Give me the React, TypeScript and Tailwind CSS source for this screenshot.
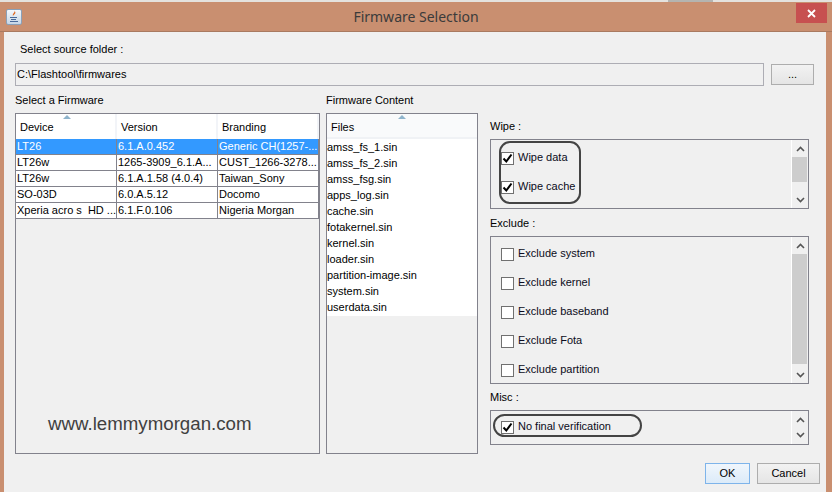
import React from 'react';

const firmwares = [
  { device: 'LT26', version: '6.1.A.0.452', branding: 'Generic CH(1257-...', selected: true },
  { device: 'LT26w', version: '1265-3909_6.1.A...', branding: 'CUST_1266-3278...' },
  { device: 'LT26w', version: '6.1.A.1.58 (4.0.4)', branding: 'Taiwan_Sony' },
  { device: 'SO-03D', version: '6.0.A.5.12', branding: 'Docomo' },
  { device: 'Xperia acro s  HD ...', version: '6.1.F.0.106', branding: 'Nigeria Morgan' },
];

const files = [
  'amss_fs_1.sin',
  'amss_fs_2.sin',
  'amss_fsg.sin',
  'apps_log.sin',
  'cache.sin',
  'fotakernel.sin',
  'kernel.sin',
  'loader.sin',
  'partition-image.sin',
  'system.sin',
  'userdata.sin',
];

const excludes = ['Exclude system', 'Exclude kernel', 'Exclude baseband', 'Exclude Fota', 'Exclude partition'];

const SortArrow = () => (
  <svg width="8" height="4" viewBox="0 0 8 4" className="block">
    <path d="M4 0 L8 4 L0 4 Z" fill="#8fb4cc" />
  </svg>
);

const Chevron = ({ down }: { down?: boolean }) => (
  <svg width="9" height="6" viewBox="0 0 9 6" className="block">
    <path d={down ? 'M1 1 L4.5 4.5 L8 1' : 'M1 5 L4.5 1.5 L8 5'} fill="none" stroke="#555" strokeWidth="1.6" />
  </svg>
);

const ScrollBar = ({ thumb }: { thumb: string }) => (
  <div className="w-[17px] shrink-0 border-l border-white flex flex-col items-center">
    <div className="h-[17px] flex items-center justify-center shrink-0">
      <Chevron />
    </div>
    <div className="flex-1 w-full">
      <div className={`bg-[#cdcdcd] w-[15px] ${thumb}`} />
    </div>
    <div className="h-[17px] flex items-center justify-center shrink-0">
      <Chevron down />
    </div>
  </div>
);

const CheckRow = ({ label, checked, className }: { label: string; checked?: boolean; className?: string }) => (
  <div className={`flex items-center gap-[4px] ${className ?? ''}`}>
    <div className="w-[13px] h-[13px] border border-[#707070] bg-white flex items-center justify-center shrink-0">
      {checked && (
        <svg width="11" height="11" viewBox="0 0 11 11" className="block">
          <path d="M1.5 5.5 L4.3 8.5 L9.5 1.5" fill="none" stroke="#000" strokeWidth="2" />
        </svg>
      )}
    </div>
    <span className="text-[#0b0b20] leading-none -mt-[2px]">{label}</span>
  </div>
);

const JavaIcon = () => (
  <div className="w-[16px] h-[16px] rounded-[2px] border border-[#8aa0b8] bg-gradient-to-b from-[#f4f8fc] to-[#c6d6e6] flex items-center justify-center">
    <svg width="12" height="13" viewBox="0 0 12 13" className="block">
      <path d="M6.5 0.5 C7.5 2.5 4 3.5 5 6 C5.5 4.5 8.5 3.5 7 1.5" fill="#e0661c" />
      <path d="M2 7.5 H9 M3 9.5 H8 M2 11.5 H10" stroke="#4a6a9a" strokeWidth="1" fill="none" />
    </svg>
  </div>
);

export default function App() {
  return (
    <div className="w-[832px] h-[492px] overflow-hidden flex flex-col bg-[#c98f70] text-[11px] text-black font-['Liberation_Sans',sans-serif]">
      <div className="h-[2px] bg-[#e4e2de] shrink-0 pl-[668px]">
        <div className="w-[45px] h-full bg-[#b4b4b0]" />
      </div>

      <div className="h-[30px] shrink-0 grid grid-cols-[1fr_auto_1fr] items-center border-b border-[#a97a60]">
        <div className="pl-[6px]">
          <JavaIcon />
        </div>
        <div className="text-[#3b3b3b] text-[14px] leading-none font-['Noto_Sans',sans-serif] mt-[1px]">Firmware Selection</div>
        <div className="flex justify-end self-start pr-[5px] pt-[1px]">
          <div className="w-[31px] h-[20px] bg-[#c75050] flex items-center justify-center">
            <svg width="9" height="9" viewBox="0 0 9 9" className="block">
              <path d="M1 1 L8 8 M8 1 L1 8" stroke="#fff" strokeWidth="1.8" />
            </svg>
          </div>
        </div>
      </div>

      <div className="flex-1 min-h-0 ml-[4px] mr-[6px] bg-[#f0f0f0] pl-[11px] pr-[6px] flex flex-col">
        <div className="h-[15px] mt-[10px] pl-[5px] flex items-center leading-none">Select source folder :</div>

        <div className="mt-[6px] flex items-center gap-[7px]">
          <div className="w-[749px] h-[23px] border border-[#adadb4] flex items-center pl-[1px] leading-none">C:\Flashtool\firmwares</div>
          <div className="w-[43px] h-[21px] border border-[#adadad] bg-gradient-to-b from-[#f2f2f2] to-[#e5e5e5] flex items-center justify-center leading-none">...</div>
        </div>

        <div className="flex-1 min-h-0 mt-[6px] flex">
          <div className="w-[305px] flex flex-col">
            <div className="h-[17px] flex items-center leading-none">Select a Firmware</div>
            <div className="relative w-[305px] h-[341px] mt-[4px] border border-[#82828c]">
              <div className="flex h-[25px] bg-white">
                {['Device', 'Version', 'Branding'].map((name, i) => (
                  <div
                    key={name}
                    className="relative w-[101px] shrink-0 flex items-center pl-[4px] pt-[2px] border-r-2 border-[#f2f4f8] leading-none"
                  >
                    {name}
                    {i === 0 && (
                      <div className="absolute top-[1px] left-[47px]">
                        <SortArrow />
                      </div>
                    )}
                  </div>
                ))}
              </div>
              {firmwares.map((f, idx) => (
                <div
                  key={idx}
                  className={`flex h-[16px] border-b border-[#82828c] ${idx === 0 ? 'bg-[#3399ff] text-white' : 'bg-white'}`}
                >
                  {[f.device, f.version, f.branding].map((cell, i) => (
                    <div
                      key={i}
                      className="w-[101px] shrink-0 border-r border-[#82828c] pl-[1px] flex items-center leading-none whitespace-pre overflow-hidden"
                    >
                      {cell}
                    </div>
                  ))}
                </div>
              ))}
              <div className="absolute left-[32px] top-[301px] text-[18.7px] leading-none text-[#404040]">
                www.lemmymorgan.com
              </div>
            </div>
          </div>

          <div className="w-[152px] ml-[6px] flex flex-col">
            <div className="h-[17px] flex items-center leading-none">Firmware Content</div>
            <div className="relative h-[341px] mt-[4px] border border-[#82828c]">
              <div className="h-[25px] bg-[#f9fafb] border-b-2 border-[#f0f2f5] flex items-center pl-[4px] pt-[3px] leading-none">Files</div>
              <div className="absolute top-[1px] left-[71px]">
                <SortArrow />
              </div>
              <div className="bg-white pb-[1px]">
                {files.map((file) => (
                  <div key={file} className="h-[16px] flex items-center leading-none">
                    {file}
                  </div>
                ))}
              </div>
            </div>
          </div>

          <div className="w-[319px] ml-[12px] flex flex-col">
            <div className="h-[15px] mt-[27px] flex items-center leading-none">Wipe :</div>
            <div className="relative h-[70px] mt-[5px] border border-[#82828c] flex">
              <div className="flex-1 pl-[10px] pt-[11px]">
                <CheckRow label="Wipe data" checked className="h-[15px]" />
                <CheckRow label="Wipe cache" checked className="h-[15px] mt-[14px]" />
              </div>
              <ScrollBar thumb="h-[25px]" />
              <div className="absolute left-[8px] top-[1px] w-[82px] h-[63px] rounded-[11px] border-2 border-[#444]" />
            </div>

            <div className="h-[15px] mt-[7px] flex items-center leading-none">Exclude :</div>
            <div className="h-[148px] mt-[5px] border border-[#82828c] flex">
              <div className="flex-1 pl-[10px] pt-[10px]">
                {excludes.map((label, i) => (
                  <CheckRow key={label} label={label} className={`h-[15px] ${i > 0 ? 'mt-[14px]' : ''}`} />
                ))}
              </div>
              <ScrollBar thumb="h-[110px]" />
            </div>

            <div className="h-[15px] mt-[6px] flex items-center leading-none">Misc :</div>
            <div className="relative h-[35px] mt-[5px] border border-[#82828c] flex">
              <div className="flex-1 pl-[10px] pt-[9px]">
                <CheckRow label="No final verification" checked className="h-[15px]" />
              </div>
              <div className="w-[17px] shrink-0 border-l border-white flex flex-col items-center justify-center gap-[9px]">
                <Chevron />
                <Chevron down />
              </div>
              <div className="absolute left-[2px] top-[3px] w-[149px] h-[23px] rounded-[12px] border-2 border-[#444]" />
            </div>

            <div className="flex justify-end gap-[7px] mt-[18px] -mr-[11px]">
              <div className="w-[45px] h-[21px] border border-[#7eb4ea] bg-gradient-to-b from-[#f0f6fc] to-[#dcebf9] flex items-center justify-center leading-none">OK</div>
              <div className="w-[63px] h-[21px] border border-[#adadad] bg-gradient-to-b from-[#f2f2f2] to-[#e5e5e5] flex items-center justify-center leading-none">Cancel</div>
            </div>
          </div>
        </div>
      </div>
    </div>
  );
}
